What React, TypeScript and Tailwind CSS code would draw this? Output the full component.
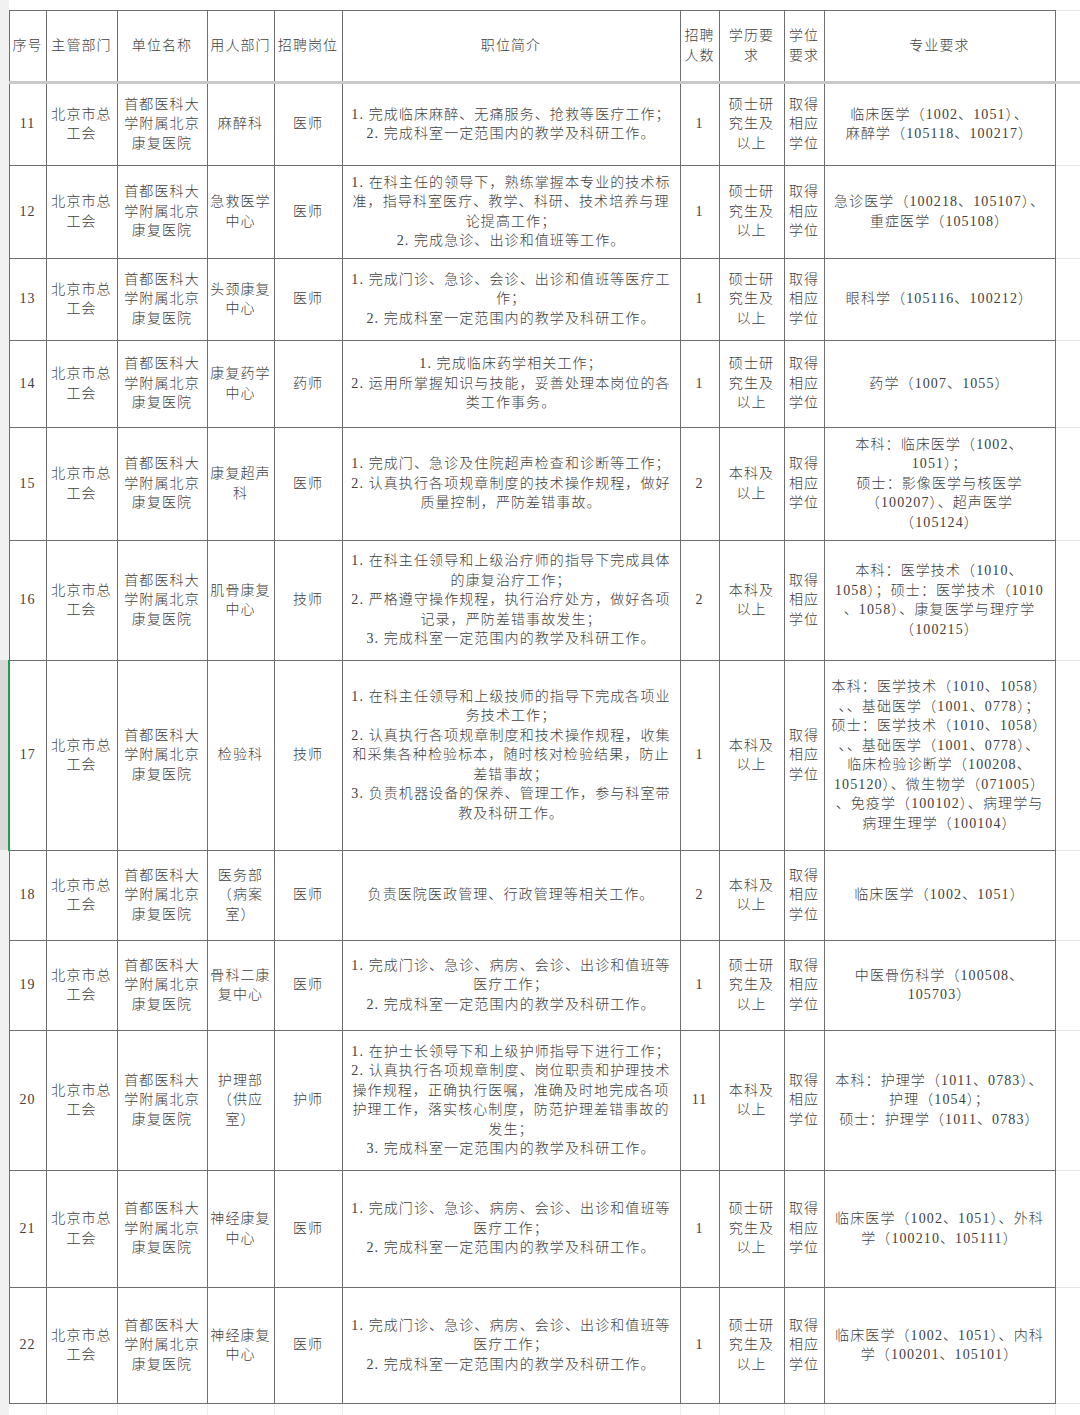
import React from 'react';

// 一行招聘岗位数据
interface JobRow {
  no: string;
  dept: string[];
  post: string;
  desc: string[];
  num: string;
  edu: string[];
  major: string[];
  h: number;
}

const MASTER = ['硕士研', '究生及', '以上'];
const BACHELOR = ['本科及', '以上'];

const rows: JobRow[] = [
  {
    no: '11',
    dept: ['麻醉科'],
    post: '医师',
    desc: ['1. 完成临床麻醉、无痛服务、抢救等医疗工作；', '2. 完成科室一定范围内的教学及科研工作。'],
    num: '1',
    edu: MASTER,
    major: ['临床医学（1002、1051）、', '麻醉学（105118、100217）'],
    h: 83,
  },
  {
    no: '12',
    dept: ['急救医学', '中心'],
    post: '医师',
    desc: [
      '1. 在科主任的领导下，熟练掌握本专业的技术标',
      '准，指导科室医疗、教学、科研、技术培养与理',
      '论提高工作；',
      '2. 完成急诊、出诊和值班等工作。',
    ],
    num: '1',
    edu: MASTER,
    major: ['急诊医学（100218、105107）、', '重症医学（105108）'],
    h: 93,
  },
  {
    no: '13',
    dept: ['头颈康复', '中心'],
    post: '医师',
    desc: ['1. 完成门诊、急诊、会诊、出诊和值班等医疗工', '作；', '2. 完成科室一定范围内的教学及科研工作。'],
    num: '1',
    edu: MASTER,
    major: ['眼科学（105116、100212）'],
    h: 82,
  },
  {
    no: '14',
    dept: ['康复药学', '中心'],
    post: '药师',
    desc: ['1. 完成临床药学相关工作；', '2. 运用所掌握知识与技能，妥善处理本岗位的各', '类工作事务。'],
    num: '1',
    edu: MASTER,
    major: ['药学（1007、1055）'],
    h: 87,
  },
  {
    no: '15',
    dept: ['康复超声', '科'],
    post: '医师',
    desc: [
      '1. 完成门、急诊及住院超声检查和诊断等工作；',
      '2. 认真执行各项规章制度的技术操作规程，做好',
      '质量控制，严防差错事故。',
    ],
    num: '2',
    edu: BACHELOR,
    major: ['本科：临床医学（1002、', '1051）；', '硕士：影像医学与核医学', '（100207）、超声医学', '（105124）'],
    h: 113,
  },
  {
    no: '16',
    dept: ['肌骨康复', '中心'],
    post: '技师',
    desc: [
      '1. 在科主任领导和上级治疗师的指导下完成具体',
      '的康复治疗工作；',
      '2. 严格遵守操作规程，执行治疗处方，做好各项',
      '记录，严防差错事故发生；',
      '3. 完成科室一定范围内的教学及科研工作。',
    ],
    num: '2',
    edu: BACHELOR,
    major: ['本科：医学技术（1010、', '1058）；硕士：医学技术（1010', '、1058）、康复医学与理疗学', '（100215）'],
    h: 120,
  },
  {
    no: '17',
    dept: ['检验科'],
    post: '技师',
    desc: [
      '1. 在科主任领导和上级技师的指导下完成各项业',
      '务技术工作；',
      '2. 认真执行各项规章制度和技术操作规程，收集',
      '和采集各种检验标本，随时核对检验结果，防止',
      '差错事故；',
      '3. 负责机器设备的保养、管理工作，参与科室带',
      '教及科研工作。',
    ],
    num: '1',
    edu: BACHELOR,
    major: [
      '本科：医学技术（1010、1058）',
      '、、基础医学（1001、0778）；',
      '硕士：医学技术（1010、1058）',
      '、、基础医学（1001、0778）、',
      '临床检验诊断学（100208、',
      '105120）、微生物学（071005）',
      '、免疫学（100102）、病理学与',
      '病理生理学（100104）',
    ],
    h: 190,
  },
  {
    no: '18',
    dept: ['医务部', '（病案', '室）'],
    post: '医师',
    desc: ['负责医院医政管理、行政管理等相关工作。'],
    num: '2',
    edu: BACHELOR,
    major: ['临床医学（1002、1051）'],
    h: 90,
  },
  {
    no: '19',
    dept: ['骨科二康', '复中心'],
    post: '医师',
    desc: ['1. 完成门诊、急诊、病房、会诊、出诊和值班等', '医疗工作；', '2. 完成科室一定范围内的教学及科研工作。'],
    num: '1',
    edu: MASTER,
    major: ['中医骨伤科学（100508、', '105703）'],
    h: 90,
  },
  {
    no: '20',
    dept: ['护理部', '（供应', '室）'],
    post: '护师',
    desc: [
      '1. 在护士长领导下和上级护师指导下进行工作；',
      '2. 认真执行各项规章制度、岗位职责和护理技术',
      '操作规程，正确执行医嘱，准确及时地完成各项',
      '护理工作，落实核心制度，防范护理差错事故的',
      '发生；',
      '3. 完成科室一定范围内的教学及科研工作。',
    ],
    num: '11',
    edu: BACHELOR,
    major: ['本科：护理学（1011、0783）、', '护理（1054）；', '硕士：护理学（1011、0783）'],
    h: 140,
  },
  {
    no: '21',
    dept: ['神经康复', '中心'],
    post: '医师',
    desc: ['1. 完成门诊、急诊、病房、会诊、出诊和值班等', '医疗工作；', '2. 完成科室一定范围内的教学及科研工作。'],
    num: '1',
    edu: MASTER,
    major: ['临床医学（1002、1051）、外科', '学（100210、105111）'],
    h: 117,
  },
  {
    no: '22',
    dept: ['神经康复', '中心'],
    post: '医师',
    desc: ['1. 完成门诊、急诊、病房、会诊、出诊和值班等', '医疗工作；', '2. 完成科室一定范围内的教学及科研工作。'],
    num: '1',
    edu: MASTER,
    major: ['临床医学（1002、1051）、内科', '学（100201、105101）'],
    h: 116,
  },
];

const cell = 'border border-[#6e6e6e] text-center align-middle px-0 py-0';
const hcell = 'border border-[#6e6e6e] border-b-[3px] border-b-[#c9c9c9] text-center align-middle';

function Lines({ items }: { items: string[] }) {
  return (
    <div className="flex flex-col items-center">
      {items.map((t, i) => (
        <div key={i} className="whitespace-nowrap">
          {t}
        </div>
      ))}
    </div>
  );
}

export default function App() {
  return (
    <div
      className="w-[1080px] h-[1415px] bg-white overflow-hidden text-[#404040] text-[14px] leading-[19.5px] tracking-[1.1px] font-light"
      style={{ fontFamily: '"Liberation Serif", "Noto Sans CJK SC", serif' }}
    >
      <table className="table-fixed border-collapse w-[1080px]">
        <colgroup>
          <col className="w-[9px]" />
          <col className="w-[37px]" />
          <col className="w-[71px]" />
          <col className="w-[90px]" />
          <col className="w-[67px]" />
          <col className="w-[68px]" />
          <col className="w-[338px]" />
          <col className="w-[39px]" />
          <col className="w-[65px]" />
          <col className="w-[40px]" />
          <col className="w-[231px]" />
          <col className="w-[25px]" />
        </colgroup>
        <tbody>
          {/* 顶部空白 */}
          <tr className="h-[10px]">
            <td className="bg-[#f1f1f1] p-0"></td>
            <td colSpan={11} className="p-0"></td>
          </tr>

          {/* 表头 */}
          <tr className="h-[72px]">
            <td className="bg-[#f1f1f1] p-0"></td>
            <td className={hcell}>序号</td>
            <td className={hcell}>主管部门</td>
            <td className={hcell}>单位名称</td>
            <td className={hcell}>用人部门</td>
            <td className={hcell}>招聘岗位</td>
            <td className={hcell}>职位简介</td>
            <td className={hcell}>
              <Lines items={['招聘', '人数']} />
            </td>
            <td className={hcell}>
              <Lines items={['学历要', '求']} />
            </td>
            <td className={hcell}>
              <Lines items={['学位', '要求']} />
            </td>
            <td className={hcell}>专业要求</td>
            <td className="border-t border-t-[#e6e6e6] border-b-[3px] border-b-[#d4d4d4] p-0"></td>
          </tr>

          {rows.map((r) => {
            const selected = r.no === '17';
            return (
              <tr key={r.no} style={{ height: r.h }}>
                <td className={selected ? 'bg-[#d9d9d9] p-0' : 'bg-[#f1f1f1] p-0'}></td>
                <td className={selected ? 'border border-[#6e6e6e] border-l-2 border-l-[#1f9d55] text-center align-middle p-0' : cell}>
                  {r.no}
                </td>
                <td className={cell}>
                  <Lines items={['北京市总', '工会']} />
                </td>
                <td className={cell}>
                  <Lines items={['首都医科大', '学附属北京', '康复医院']} />
                </td>
                <td className={cell}>
                  <Lines items={r.dept} />
                </td>
                <td className={cell}>{r.post}</td>
                <td className={cell}>
                  <Lines items={r.desc} />
                </td>
                <td className={cell}>{r.num}</td>
                <td className={cell}>
                  <Lines items={r.edu} />
                </td>
                <td className={cell}>
                  <Lines items={['取得', '相应', '学位']} />
                </td>
                <td className={cell}>
                  <Lines items={r.major} />
                </td>
                <td className="border-y border-y-[#e6e6e6] p-0"></td>
              </tr>
            );
          })}

          {/* 底部空白 */}
          <tr className="h-[12px]">
            <td className="bg-[#f1f1f1] p-0"></td>
            <td className="border-r border-r-[#ececec] p-0"></td>
            <td className="border-r border-r-[#ececec] p-0"></td>
            <td className="border-r border-r-[#ececec] p-0"></td>
            <td className="border-r border-r-[#ececec] p-0"></td>
            <td className="border-r border-r-[#ececec] p-0"></td>
            <td className="border-r border-r-[#ececec] p-0"></td>
            <td className="border-r border-r-[#ececec] p-0"></td>
            <td className="border-r border-r-[#ececec] p-0"></td>
            <td className="border-r border-r-[#ececec] p-0"></td>
            <td className="border-r border-r-[#ececec] p-0"></td>
            <td className="p-0"></td>
          </tr>
        </tbody>
      </table>
    </div>
  );
}
